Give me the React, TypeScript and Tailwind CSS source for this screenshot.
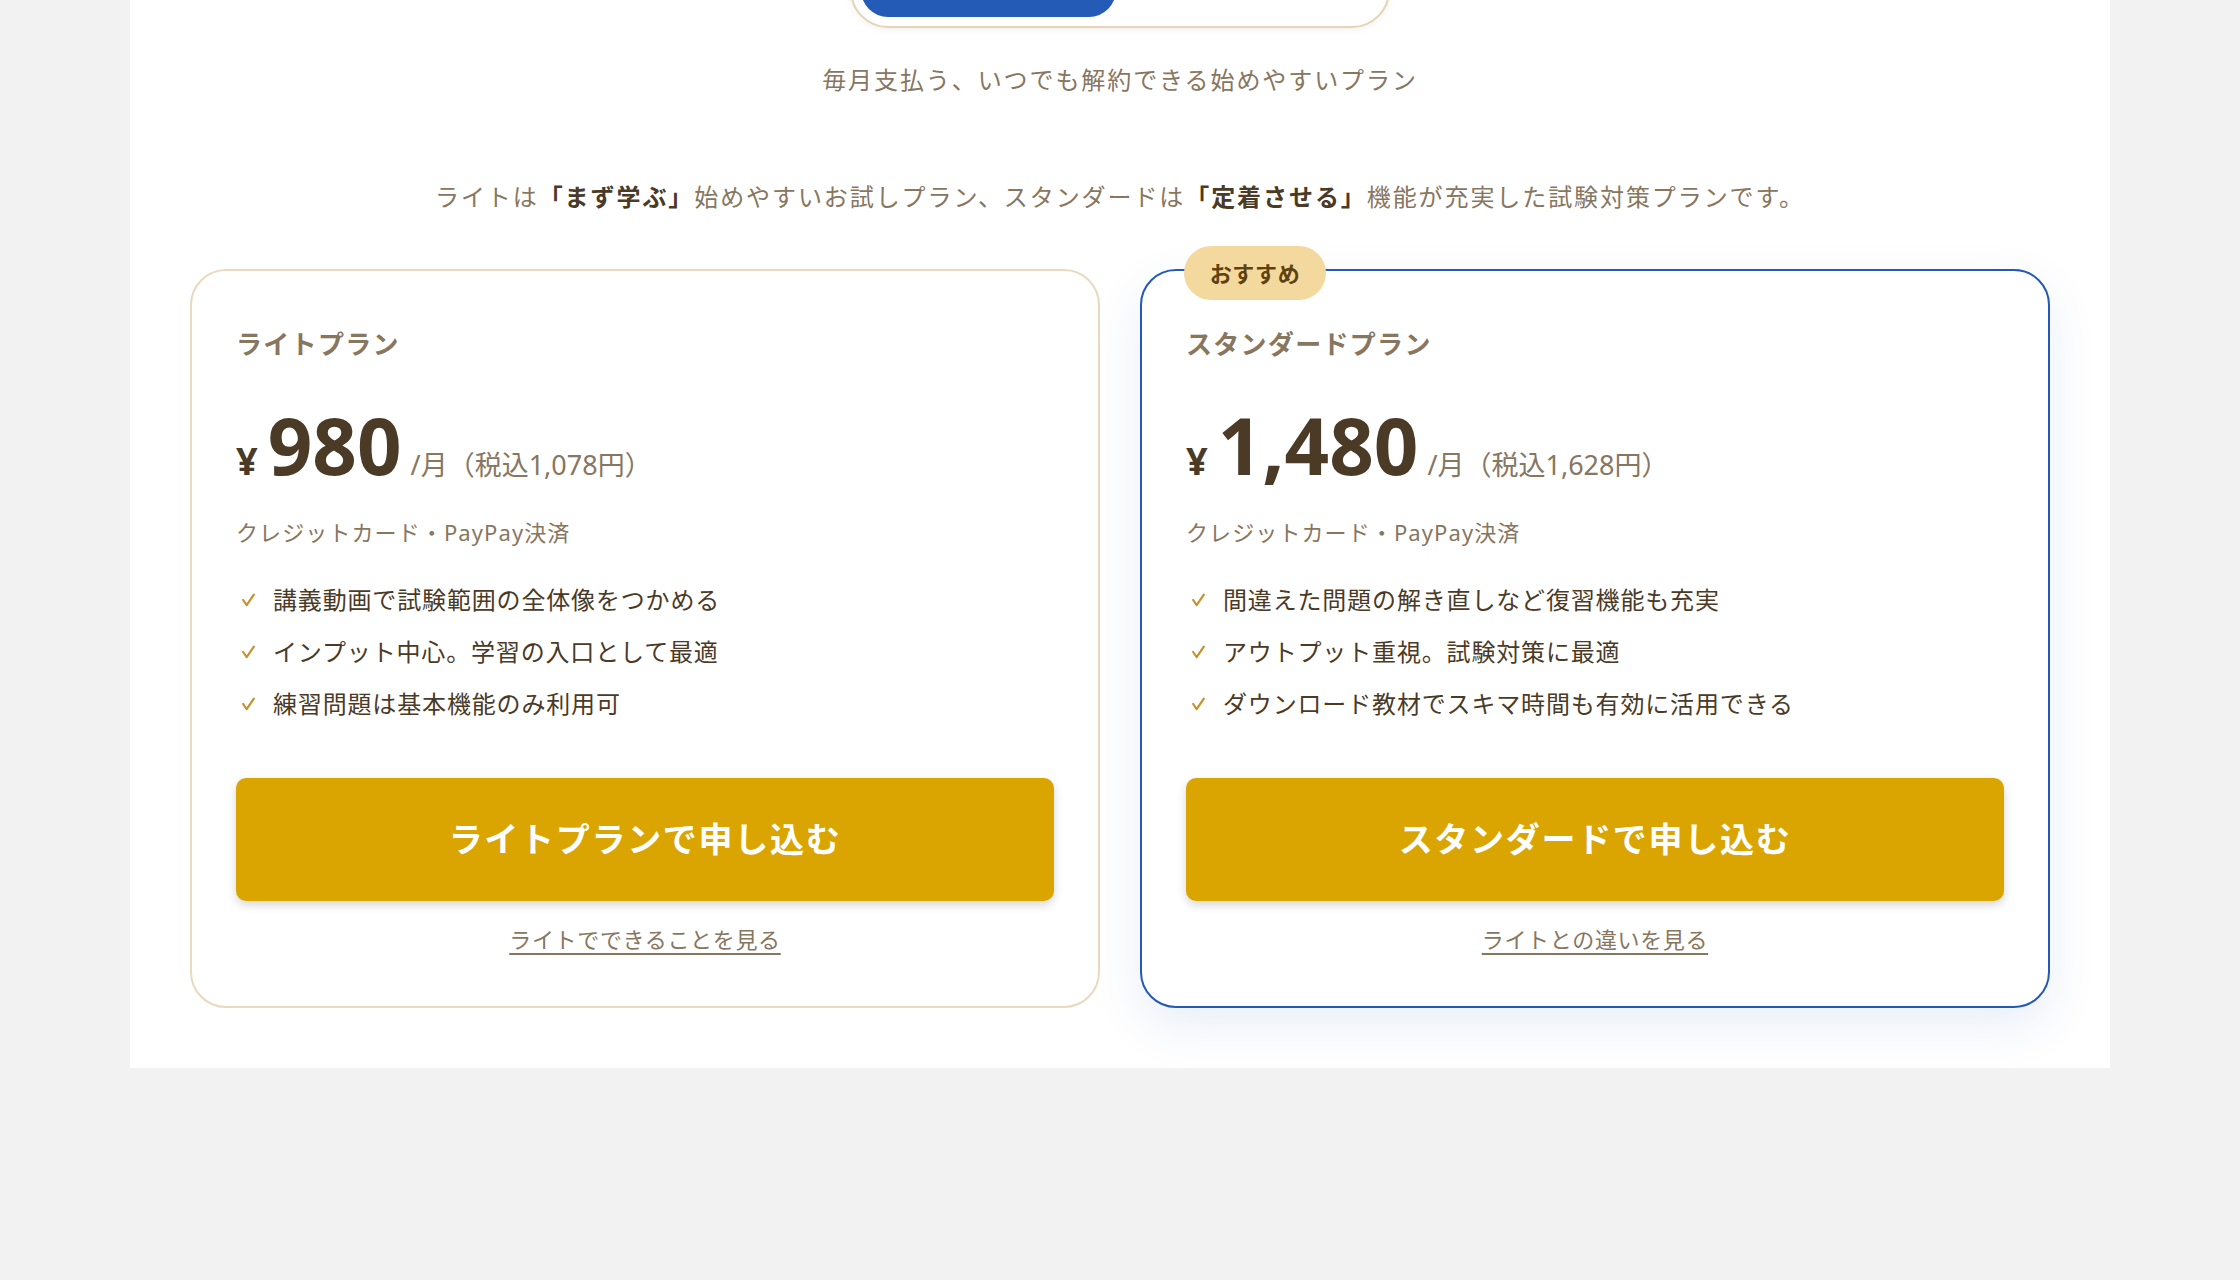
import React from "react";

const Check = () => (
  <svg viewBox="0 0 14 14" className="ml-[5px] h-[16px] w-[15px] shrink-0" fill="none">
    <path d="M2 7 L5.3 11.8 L12 2" stroke="#c8902a" strokeWidth="2" strokeLinecap="round" strokeLinejoin="round" />
  </svg>
);

type Plan = {
  name: string;
  price: string;
  tax: string;
  features: string[];
  cta: string;
  link: string;
  featured?: boolean;
};

const plans: Plan[] = [
  {
    name: "ライトプラン",
    price: "980",
    tax: "1,078円",
    features: [
      "講義動画で試験範囲の全体像をつかめる",
      "インプット中心。学習の入口として最適",
      "練習問題は基本機能のみ利用可",
    ],
    cta: "ライトプランで申し込む",
    link: "ライトでできることを見る",
  },
  {
    name: "スタンダードプラン",
    price: "1,480",
    tax: "1,628円",
    features: [
      "間違えた問題の解き直しなど復習機能も充実",
      "アウトプット重視。試験対策に最適",
      "ダウンロード教材でスキマ時間も有効に活用できる",
    ],
    cta: "スタンダードで申し込む",
    link: "ライトとの違いを見る",
    featured: true,
  },
];

function Card({ plan }: { plan: Plan }) {
  return (
    <div
      className={
        plan.featured
          ? "relative flex flex-col rounded-[36px] border-2 border-[#2459b6] bg-white px-[44px] pt-[54px] pb-[50px] shadow-[0_18px_48px_rgba(36,89,182,0.10)]"
          : "relative flex flex-col rounded-[36px] border-2 border-[#e8d9bf] bg-white px-[44px] pt-[54px] pb-[50px]"
      }
    >
      {plan.featured && (
        <div className="absolute -top-[25px] left-[42px] flex h-[54px] w-[142px] items-center justify-center rounded-full bg-[#f4d99e] text-[22px] font-bold tracking-[0.03em] text-[#5e420f]">
          おすすめ
        </div>
      )}
      <h3 className="text-[26px] font-bold leading-[39px] tracking-[0.05em] text-[#877660]">{plan.name}</h3>
      <div className="mt-[42px] flex items-baseline leading-none">
        <span className="text-[38px] font-bold leading-none text-[#4a3a26]">¥</span>
        <span className="ml-[10px] font-['Noto_Sans',sans-serif] text-[78px] font-bold leading-none text-[#4a3a26]">
          {plan.price}
        </span>
        <span className="ml-[9px] text-[27px] leading-none text-[#877660]">/月（税込{plan.tax}）</span>
      </div>
      <p className="mt-[32px] text-[22px] leading-[33px] tracking-[0.05em] text-[#877660]">クレジットカード・PayPay決済</p>
      <ul className="mt-[33px] flex flex-col gap-[16px]">
        {plan.features.map((f) => (
          <li key={f} className="flex items-center">
            <Check />
            <span className="ml-[17px] text-[24px] leading-[36px] tracking-[0.035em] text-[#4a3a26]">{f}</span>
          </li>
        ))}
      </ul>
      <button className="mt-[56px] flex h-[123px] w-full items-center justify-center rounded-[10px] bg-[#dba501] text-[34px] font-bold tracking-[0.05em] text-white shadow-[0_4px_10px_rgba(0,0,0,0.16)]">
        {plan.cta}
      </button>
      <a className="mt-[22px] self-center text-[22px] leading-[33px] tracking-[0.03em] text-[#877660] underline decoration-[2px] underline-offset-[5px]">
        {plan.link}
      </a>
    </div>
  );
}

export default function App() {
  return (
    <div className="min-h-[1280px] bg-[#f2f2f2] font-['Noto_Sans','Noto_Sans_CJK_JP',sans-serif]">
      <div className="mx-auto flex w-[1980px] flex-col bg-white px-[60px] pb-[60px]">
        <div className="mx-auto -mt-[48px] flex h-[76px] w-[540px] rounded-full border-2 border-[#e5d5b8] bg-white p-[9px] shadow-[0_2px_6px_rgba(120,90,40,0.08)]">
          <div className="h-full w-[255px] rounded-full bg-[#245bb6]" />
        </div>
        <p className="mt-[34px] text-center text-[24px] leading-[36px] tracking-[0.08em] text-[#877660]">
          毎月支払う、いつでも解約できる始めやすいプラン
        </p>
        <p className="mt-[81px] text-center text-[24px] leading-[36px] tracking-[0.08em] text-[#877660]">
          ライトは<span className="font-bold text-[#4a3a26]">「まず学ぶ」</span>始めやすいお試しプラン、スタンダードは
          <span className="font-bold text-[#4a3a26]">「定着させる」</span>機能が充実した試験対策プランです。
        </p>
        <div className="mt-[54px] grid grid-cols-2 gap-[40px]">
          {plans.map((p) => (
            <Card key={p.name} plan={p} />
          ))}
        </div>
      </div>
    </div>
  );
}
